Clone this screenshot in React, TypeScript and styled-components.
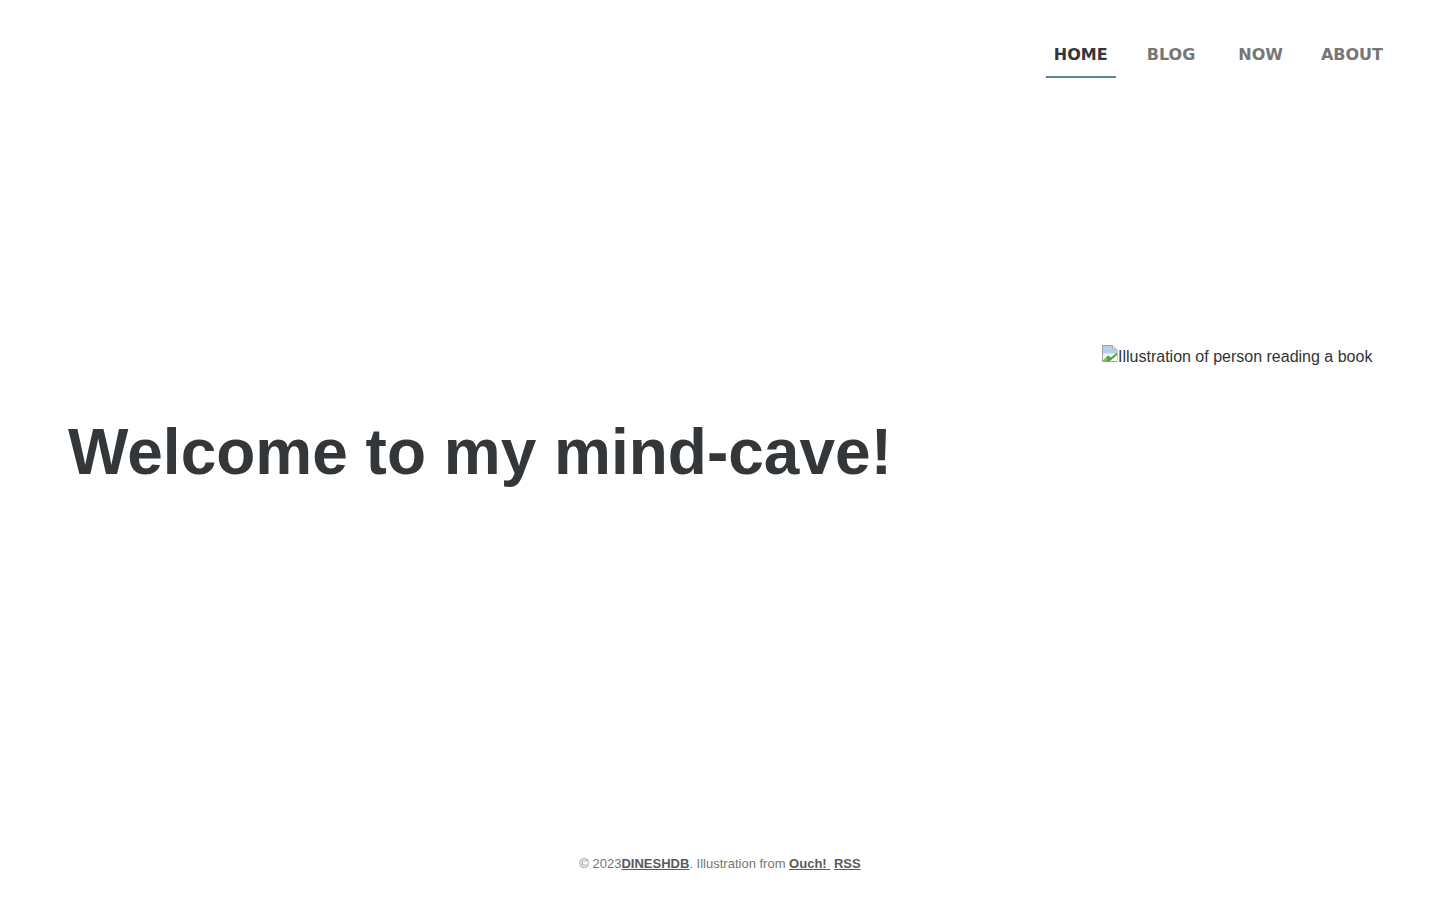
import React from 'react';
import styled, { createGlobalStyle } from 'styled-components';

const GlobalStyle = createGlobalStyle`
  html, body {
    margin: 0;
    padding: 0;
    background: #ffffff;
  }
  body {
    font-family: 'Liberation Sans', Arial, sans-serif;
    color: #33373a;
  }
`;

const StyledPage = styled.div`
  display: flex;
  flex-direction: column;
  min-height: 900px;
`;
const StyledHeader = styled.header`
  display: flex;
  justify-content: flex-end;
  padding: 40px 49px 0 0;
  height: 60px;
`;
const StyledNav = styled.nav`
  display: flex;
  align-items: flex-start;
`;
const StyledNavLink = styled.a<{ $active?: boolean; $extra?: number }>`
  display: block;
  padding: 5px 8px 11px;
  margin-left: ${(p) => p.$extra ?? 23}px;
  font-family: 'DejaVu Sans', 'Noto Sans', sans-serif;
  font-weight: 700;
  font-size: 16px;
  line-height: 20px;
  text-decoration: none;
  color: ${(p) => (p.$active ? '#33373a' : '#767676')};
  border-bottom: 2px solid ${(p) => (p.$active ? '#4f8b97' : 'transparent')};
  cursor: pointer;
`;
const StyledHero = styled.main`
  flex: 1;
  display: flex;
  align-items: center;
  justify-content: space-between;
  padding: 0 68px;
  height: 740px;
  box-sizing: border-box;
`;
const StyledTitle = styled.h1`
  margin: 0;
  font-size: 64px;
  line-height: 74px;
  font-weight: 700;
  color: #33373a;
  transform: translateY(-26px);
`;
const StyledFigure = styled.div`
  display: flex;
  align-items: flex-start;
  height: 216px;
  width: 270px;
  transform: translateY(-25px);
`;
const StyledAlt = styled.span`
  font-size: 16px;
  line-height: 24px;
  color: #333333;
  white-space: nowrap;
  display: flex;
  align-items: flex-start;
`;
const StyledFooter = styled.footer`
  text-align: center;
  font-size: 13px;
  color: #767676;
  padding: 0 0 28px;
  line-height: 16px;
`;
const StyledFooterLink = styled.a`
  color: #5a5a5a;
  font-weight: 700;
  text-decoration: underline;
`;

function BrokenImage(): JSX.Element {
  return (
    <svg width="16" height="17" viewBox="0 0 16 17" style={{ flexShrink: 0, marginRight: 0 }}>
      <path d="M0.5 0.5h10l4.5 4.5v11.5h-14.5z" fill="#f4f4f4" stroke="#a0a0a0" />
      <path d="M10.5 0.5v4.5h4.5" fill="#dcdcdc" stroke="#a0a0a0" />
      <path d="M1 1h9.5v4.5h4v3H1z" fill="#b4d2ee" />
      <path d="M1 16l5-5.5 3 2 6-5v8.5z" fill="#4fa23a" />
      <path d="M8 16l7-6v6z" fill="#ffffff" />
      <path d="M1 16l3.5-3.5 2 1.5-2.5 2z" fill="#7cc05a" />
    </svg>
  );
}

function App(): JSX.Element {
  return (
    <StyledPage>
      <GlobalStyle />
      <StyledHeader>
        <StyledNav>
          <StyledNavLink $active $extra={0}>HOME</StyledNavLink>
          <StyledNavLink>BLOG</StyledNavLink>
          <StyledNavLink $extra={27}>NOW</StyledNavLink>
          <StyledNavLink $extra={22}>ABOUT</StyledNavLink>
        </StyledNav>
      </StyledHeader>
      <StyledHero>
        <StyledTitle>Welcome to my mind-cave!</StyledTitle>
        <StyledFigure>
          <StyledAlt>
            <BrokenImage />
            Illustration of person reading a book
          </StyledAlt>
        </StyledFigure>
      </StyledHero>
      <StyledFooter>
        © 2023<StyledFooterLink>DINESHDB</StyledFooterLink>. Illustration from{' '}
        <StyledFooterLink>Ouch!&nbsp;</StyledFooterLink> <StyledFooterLink>RSS</StyledFooterLink>
      </StyledFooter>
    </StyledPage>
  );
}

export default App;
